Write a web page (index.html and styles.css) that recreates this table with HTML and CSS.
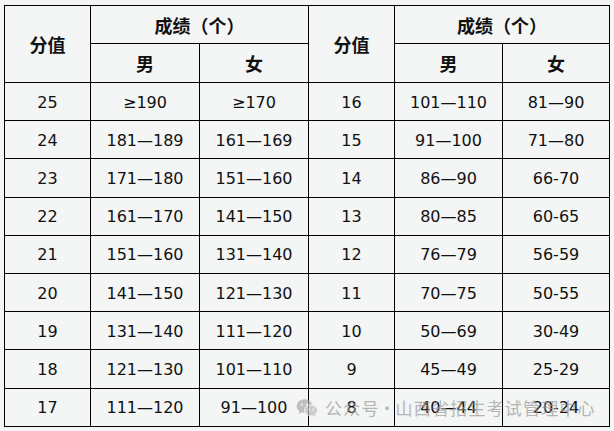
FILE: index.html
```html
<!DOCTYPE html>
<html lang="zh">
<head>
<meta charset="utf-8">
<link rel="stylesheet" href="styles.css">
</head>
<body>
<div class="wrap">
<table class="score">
<colgroup>
<col class="c1"><col class="c2"><col class="c3"><col class="c4"><col class="c5"><col class="c6">
</colgroup>
<thead>
<tr class="h1">
<th rowspan="2">分值</th><th colspan="2">成绩（个）</th>
<th rowspan="2">分值</th><th colspan="2">成绩（个）</th>
</tr>
<tr class="h2">
<th>男</th><th>女</th><th>男</th><th>女</th>
</tr>
</thead>
<tbody>
<tr><td>25</td><td>≥190</td><td>≥170</td><td>16</td><td>101—110</td><td>81—90</td></tr>
<tr><td>24</td><td>181—189</td><td>161—169</td><td>15</td><td>91—100</td><td>71—80</td></tr>
<tr><td>23</td><td>171—180</td><td>151—160</td><td>14</td><td>86—90</td><td>66-70</td></tr>
<tr><td>22</td><td>161—170</td><td>141—150</td><td>13</td><td>80—85</td><td>60-65</td></tr>
<tr><td>21</td><td>151—160</td><td>131—140</td><td>12</td><td>76—79</td><td>56-59</td></tr>
<tr><td>20</td><td>141—150</td><td>121—130</td><td>11</td><td>70—75</td><td>50-55</td></tr>
<tr><td>19</td><td>131—140</td><td>111—120</td><td>10</td><td>50—69</td><td>30-49</td></tr>
<tr><td>18</td><td>121—130</td><td>101—110</td><td>9</td><td>45—49</td><td>25-29</td></tr>
<tr><td>17</td><td>111—120</td><td>91—100</td><td>8</td><td>40—44</td><td>20-24</td></tr>
</tbody>
</table>
<div class="watermark">
<svg class="wx" width="22" height="20" viewBox="0 0 22 20">
<ellipse cx="8.5" cy="8" rx="8" ry="6.8" fill="#a9a9a9"/>
<path d="M3.5 12.5 L2.5 16 L6.5 14 Z" fill="#a9a9a9"/>
<ellipse cx="15" cy="12.5" rx="6.5" ry="5.5" fill="#bdbdbd" stroke="#f4f5f5" stroke-width="1"/>
<path d="M18.5 16.5 L20 19 L16.5 17.5 Z" fill="#bdbdbd"/>
<circle cx="5.8" cy="6.5" r="1.1" fill="#f4f5f5"/>
<circle cx="11" cy="6.5" r="1.1" fill="#f4f5f5"/>
<circle cx="13" cy="11.5" r="0.9" fill="#f4f5f5"/>
<circle cx="17.3" cy="11.5" r="0.9" fill="#f4f5f5"/>
</svg>
<span class="wtext">公众号<span class="dot">·</span>山西省招生考试管理中心</span>
</div>
</div>
</body>
</html>
```

FILE: styles.css
```css
html, body {
  margin: 0;
  padding: 0;
  background: #f4f5f5;
}
body {
  font-family: "DejaVu Sans", "Noto Sans CJK SC", sans-serif;
  color: #111;
}
.wrap {
  position: relative;
  padding: 5px 0 0 4px;
}
.score {
  border-collapse: collapse;
  table-layout: fixed;
  width: 605px;
  background: #f4f5f5;
}
.c1 { width: 86px; }
.c2 { width: 109px; }
.c3 { width: 109px; }
.c4 { width: 86px; }
.c5 { width: 108px; }
.c6 { width: 107px; }
.score th, .score td {
  border: 1px solid #000;
  text-align: center;
  vertical-align: middle;
  padding: 0;
}
.score th {
  font-family: "Noto Sans CJK SC", sans-serif;
  font-weight: 700;
  font-size: 18px;
  color: #111;
}
.h1 { height: 38px; }
.h2 { height: 39px; }
.score tbody tr { height: 38.2px; }
.score td {
  font-size: 16px;
  padding-top: 1px;
}
.watermark {
  position: absolute;
  left: 296px;
  top: 395px;
  display: flex;
  align-items: center;
  gap: 7px;
  opacity: 0.7;
}
.wtext {
  font-family: "Noto Sans CJK SC", sans-serif;
  font-size: 17px;
  letter-spacing: 1.2px;
  color: #9a9a9a;
  white-space: nowrap;
}
.dot {
  display: inline-block;
  width: 16px;
  text-align: center;
  letter-spacing: 0;
  margin-left: -1px;
  margin-right: 1px;
}
```
